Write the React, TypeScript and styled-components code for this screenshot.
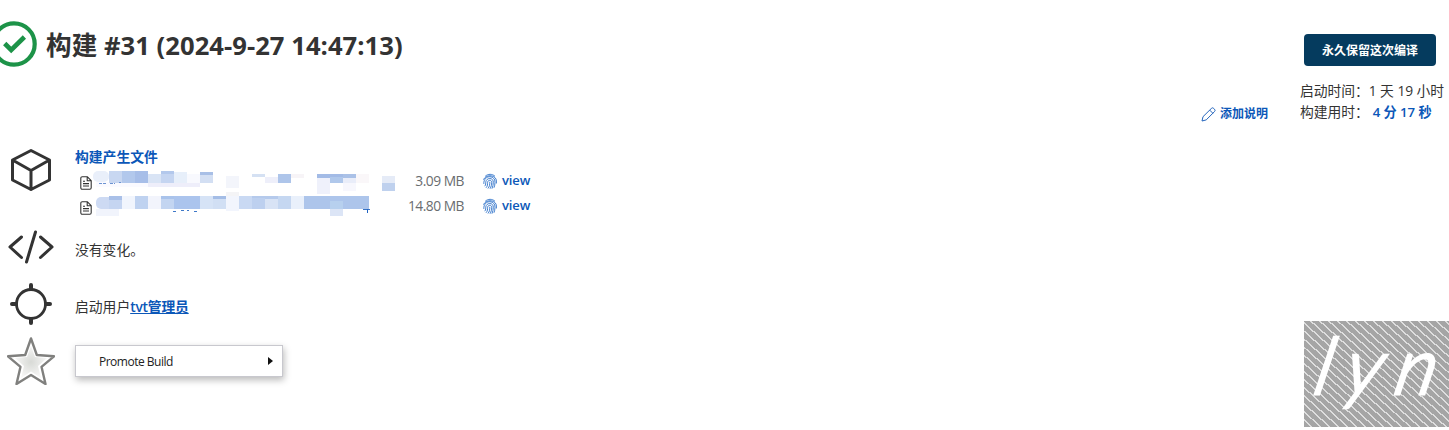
import React from "react";
import styled, { createGlobalStyle } from "styled-components";

const Global = createGlobalStyle`
  * { box-sizing: border-box; }
  body {
    margin: 0;
    background: #fff;
    color: #333;
    overflow: hidden;
    font: 13.8px/20px "Open Sans", "Noto Sans CJK SC", sans-serif;
  }
`;

const Page = styled.div`
  display: flex;
  justify-content: space-between;
  height: 430px;
  overflow: hidden;
`;

const Main = styled.main`
  width: 700px;
`;

const Title = styled.h1<{ $tracking: string }>`
  display: flex;
  align-items: center;
  gap: 9px;
  height: 48px;
  margin: 20px 0 76px -9px;
  font-size: 25.6px;
  line-height: 48px;
  font-weight: 700;
  white-space: nowrap;
  letter-spacing: ${(p) => p.$tracking};
  span { padding-top: 4px; }
`;

const Section = styled.section<{ $height: number; $pad: number }>`
  display: flex;
  height: ${(p) => p.$height}px;
  padding-left: 7px;
  gap: 20px;
  > div {
    padding-top: ${(p) => p.$pad}px;
  }
`;

const SectionIcon = styled.svg`
  width: 48px;
  height: 48px;
  flex: none;
  fill: none;
  stroke: #333;
  stroke-linecap: round;
  stroke-linejoin: round;
`;

const Strong = styled.a`
  color: #0b57b8;
  font-weight: 700;
`;

const UserLink = styled(Strong)`
  font-weight: 600;
  letter-spacing: -0.2px;
  text-decoration: underline;
`;

const Heading = styled(Strong)`
  display: block;
  height: 21px;
`;

const FileRow = styled.div`
  display: grid;
  grid-template-columns: 15px 302px 69px 19px 1fr;
  width: 470px;
  height: 25px;
  padding-left: 3px;
  align-items: start;
  svg { display: block; overflow: visible; }
`;

const Size = styled.span`
  color: #6a6d70;
  text-align: right;
  letter-spacing: -0.5px;
  line-height: 25px;
`;

const View = styled(Strong)`
  font-size: 13px;
  font-weight: 600;
  line-height: 25px;
  padding-left: 19px;
  letter-spacing: -0.1px;
`;

const PrintIcon = styled.svg`
  margin: 6px 0 0 19px;
`;

const FileIcon = styled.svg`
  margin: 8px 0 0 2px;
`;

const Promote = styled.button`
  display: flex;
  align-items: center;
  justify-content: space-between;
  width: 208px;
  height: 32px;
  padding: 0 9px 0 23px;
  border: 1px solid #c8c8ce;
  background: #fff;
  box-shadow: 1px 3px 7px rgba(0, 0, 0, 0.28);
  color: #222;
  font: 12px "Open Sans", sans-serif;
  letter-spacing: -0.5px;
`;

const Arrow = styled.i`
  border-left: 5px solid #111;
  border-top: 4px solid transparent;
  border-bottom: 4px solid transparent;
`;

const Aside = styled.aside`
  display: flex;
  flex-direction: column;
  align-items: flex-end;
  width: 249px;
`;

const Keep = styled.button`
  width: 132px;
  height: 32px;
  margin: 34px 13px 15px 0;
  padding: 0 0 1px;
  border: 0;
  border-radius: 4px;
  background: #053b5e;
  color: #fff;
  font: 700 12px "Noto Sans CJK SC", sans-serif;
`;

const Info = styled.div`
  display: flex;
  align-items: flex-end;
  width: 100%;
  height: 42px;
`;

const AddNote = styled(Strong)`
  display: flex;
  align-items: center;
  gap: 4px;
  width: 100px;
  height: 18px;
  padding-left: 1px;
  font-size: 12px;
`;

const Times = styled.div`
  line-height: 21px;
  white-space: nowrap;
  letter-spacing: -0.05px;
`;

const Duration = styled(Strong)`
  margin-left: 4px;
  font-size: 13.2px;
  font-weight: 600;
`;

const Signature = styled.div`
  display: flex;
  justify-content: center;
  width: 145px;
  height: 106px;
  margin: auto 0 3px;
  background: repeating-linear-gradient(42deg, #a5a5a5 0 4.6px, #dedede 4.6px 6px);
  color: #fff;
  font: italic 300 78px/86px Lato, sans-serif;
  letter-spacing: 14px;
  -webkit-text-stroke: 3px #fff;
  span {
    padding-left: 14px;
    transform: skewX(-12deg);
  }
`;

type Cell = [number, number, number, number, string];

const firstCells: Cell[] = [
  [0, 3, 16, 11, "#e9effa"], [3, 14, 104, 5, "#fafaff"], [94, 6, 13, 10, "#f8f9fe"],
  [16, 3, 13, 12, "#c8d7f1"], [29, 3, 26, 12, "#b2c8ec"], [42, 3, 13, 12, "#a7bee8"],
  [55, 6, 13, 9, "#d9e4f5"], [68, 3, 13, 12, "#c5d5f1"], [68, 3, 13, 3, "#b3c8ec"],
  [81, 4, 13, 11, "#e7effa"], [55, 15, 52, 4, "#eeeefa"],
  [107, 4, 13, 3, "#a8bfe6"], [107, 7, 13, 8, "#d3dff3"], [133, 8, 13, 12, "#f3f5fb"],
  [159, 6, 13, 3, "#d5e1f3"], [172, 9, 13, 6, "#eeeffa"], [185, 6, 13, 9, "#aec5ea"],
  [198, 6, 13, 4, "#f7f4f7"], [224, 6, 13, 4, "#a3bbe6"], [237, 6, 13, 9, "#b0c8eb"],
  [250, 6, 13, 4, "#aac1e7"], [237, 6, 13, 3, "#a3bbe6"], [224, 10, 13, 16, "#eff1fb"],
  [250, 10, 13, 5, "#e9edf9"], [250, 15, 13, 8, "#f7f7fd"], [263, 6, 13, 9, "#faf7f9"],
  [289, 8, 13, 7, "#e5ebf7"], [289, 15, 13, 8, "#bfd1ee"],
];

const secondCells: Cell[] = [
  [3, 4, 20, 12, "#cddaf3"], [16, 3, 13, 4, "#a9c0e8"], [16, 7, 13, 9, "#c5d5f1"],
  [3, 16, 23, 7, "#f1f4fc"], [29, 3, 13, 13, "#f1f5fd"], [42, 3, 13, 13, "#bfd2f0"],
  [55, 3, 13, 13, "#f2f4fc"], [68, 3, 13, 13, "#c3d5f1"], [68, 3, 13, 3, "#a9c3eb"],
  [81, 3, 26, 13, "#abc4ed"], [107, 3, 13, 13, "#d6e3f6"], [120, 3, 13, 3, "#a4bde6"],
  [120, 6, 13, 10, "#d1dff4"], [133, 3, 13, 15, "#f2f5fd"], [133, -1, 13, 4, "#f4f4f6"],
  [146, 3, 13, 13, "#c9d9f3"], [159, 3, 13, 13, "#bdd0ef"], [172, 3, 13, 3, "#b5caec"],
  [159, 3, 13, 2, "#b5caec"], [172, 6, 13, 10, "#d8e3f5"], [185, 3, 13, 13, "#c5d7f1"],
  [198, 3, 13, 13, "#e9f0fb"], [211, 3, 65, 13, "#adc5eb"], [237, 8, 13, 8, "#b7d0ee"],
  [237, 16, 13, 7, "#dce5f6"],
  [80, 18, 3, 1, "#3e78c8"], [88, 17, 3, 1, "#3e78c8"], [94, 17, 2, 1, "#3e78c8"],
  [101, 18, 3, 1, "#3e78c8"], [270, 16, 7, 1, "#3974c6"], [274, 16, 1, 4, "#1f63c2"],
];

const Mosaic = ({ cells }: { cells: Cell[] }) => (
  <svg width="302" height="24">
    {cells.map(([x, y, w, h, fill], i) => (
      <rect key={i} x={x} y={y} width={w} height={h} fill={fill} rx={i === 0 ? 5 : 0} />
    ))}
    {cells === firstCells && <path d="M6 15.5h7m4 0h5m4-1h2" stroke="#6b93d2" strokeDasharray="3 1" />}
  </svg>
);

const DocIcon = () => (
  <FileIcon width="12" height="14" viewBox="0 0 12 14" fill="none" stroke="#333" strokeWidth="1.1" strokeLinejoin="round">
    <path d="M2.2.7h5l4 4v7.1a1.4 1.4 0 0 1-1.4 1.4H2.2A1.4 1.4 0 0 1 .8 11.8V2.1A1.4 1.4 0 0 1 2.2.7ZM7.2.7v4h4M3 5.3h2M3 7.6h6M3 10h6" />
  </FileIcon>
);

const Fingerprint = () => (
  <PrintIcon width="14" height="15" viewBox="0 0 14 15" fill="none" stroke="#2d70c8" strokeWidth=".9" strokeLinecap="round">
    <path d="M2.5 2C5-.3 9.3-.3 11.7 2M.6 5.3C2.9.6 11 .5 13 5.1c.5 1.2.5 2.6.4 4M.8 9.5C.6 5.2 3.5 2.7 6.9 2.7c3.3 0 5.2 2.5 5.1 5.5 0 2.3-.4 4-.9 5.2M2 11.9c1.1-1.1.6-2.7.8-4.1.3-1.9 1.9-3.3 4-3.3 2.3 0 3.6 1.7 3.5 3.8 0 2.4-.4 4-1.2 6M3.3 13.5c1.5-1.7 1.2-3.3 1.3-5.1.1-1.3 1-2.1 2.2-2.1s2 .9 1.9 2.2c0 2.3-.5 4-1.5 5.9M5.2 14.2c1.4-1.8 1.6-3.5 1.6-6" />
  </PrintIcon>
);

const FileEntry = ({ cells, size }: { cells: Cell[]; size: string }) => (
  <FileRow>
    <DocIcon />
    <Mosaic cells={cells} />
    <Size>{size}</Size>
    <Fingerprint />
    <View>view</View>
  </FileRow>
);

export default function App() {
  return (
    <>
      <Global />
      <Page>
        <Main>
          <Title $tracking="0.04px">
            <svg width="46" height="48" viewBox="0 0 46 48" fill="none" stroke="#1d9348">
              <circle cx="23" cy="24" r="20.7" strokeWidth="4.2" />
              <path d="m13.7 23.5 6.5 6.5L33.4 17" strokeWidth="4.6" />
            </svg>
            <span>构建 #31 (2024-9-27 14:47:13)</span>
          </Title>

          <Section $height={79} $pad={3}>
            <SectionIcon viewBox="0 0 48 48" strokeWidth="3">
              <path d="M24 6.5 42.5 16v20L24 45.5 5.5 36V16L24 6.5ZM5.5 16 24 26.5 42.5 16M24 26.5v19" />
            </SectionIcon>
            <div>
              <Heading>构建产生文件</Heading>
              <FileEntry cells={firstCells} size="3.09 MB" />
              <FileEntry cells={secondCells} size="14.80 MB" />
            </div>
          </Section>

          <Section $height={57} $pad={17}>
            <SectionIcon viewBox="0 0 48 48" strokeWidth="3">
              <path d="M14.5 14 3 24l11.5 10.5M33.5 14 45 24 33.5 34.5M28.5 9l-9 30" />
            </SectionIcon>
            <div>没有变化。</div>
          </Section>

          <Section $height={57} $pad={17}>
            <SectionIcon viewBox="0 0 48 48">
              <circle cx="24" cy="24" r="14.5" strokeWidth="2.8" />
              <path d="M24 5v4M24 39v4M5 24h4M39 24h4" strokeWidth="4" />
            </SectionIcon>
            <div>启动用户<UserLink>tvt管理员</UserLink></div>
          </Section>

          <Section $height={57} $pad={8}>
            <SectionIcon viewBox="0 0 48 48">
              <defs>
                <radialGradient id="star">
                  <stop offset="0" stopColor="#d8dad6" />
                  <stop offset="1" stopColor="#f6f6f5" />
                </radialGradient>
              </defs>
              <path d="M24 1.5 29.8 18l17.2 1.3L34.5 29.8 38.5 47 24 38 9.5 47 13.5 29.8 1 19.3 18.2 18Z" fill="#fff" stroke="#80807e" strokeWidth="2.4" />
              <path d="m24 9 4 11 12 1-9 8 3 12-10-6.5L14 41l3-12-9-8 12-1Z" fill="url(#star)" stroke="none" />
            </SectionIcon>
            <div><Promote>Promote Build<Arrow /></Promote></div>
          </Section>
        </Main>

        <Aside>
          <Keep>永久保留这次编译</Keep>
          <Info>
            <AddNote>
              <svg width="15" height="15" viewBox="0 0 15 15" fill="none" stroke="#2465bd" strokeLinejoin="round">
                <path d="m1 14 1-4.3 8.3-8.2a1.7 1.7 0 0 1 2.5 0l.7.7a1.7 1.7 0 0 1 0 2.4L5.2 12.9 1 14ZM8.7 3.1l3.2 3.2" />
              </svg>
              添加说明
            </AddNote>
            <Times>
              <div>启动时间：1 天 19 小时</div>
              <div>构建用时：<Duration>4 分 17 秒</Duration></div>
            </Times>
          </Info>
          <Signature><span>lyn</span></Signature>
        </Aside>
      </Page>
    </>
  );
}
